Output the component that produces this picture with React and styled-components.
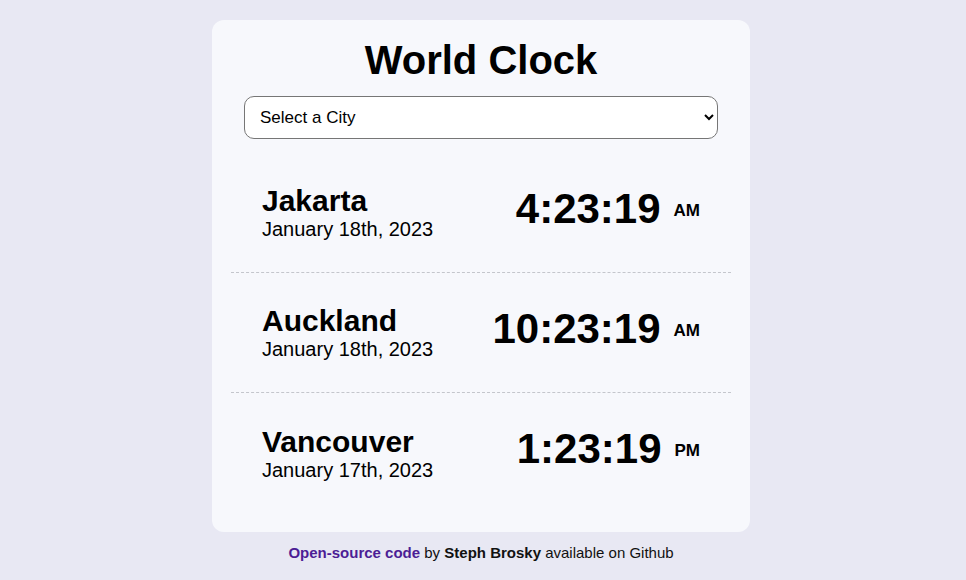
import React from "react";
import styled, { createGlobalStyle } from "styled-components";

const GlobalStyle = createGlobalStyle`
  html, body {
    margin: 0;
    padding: 0;
    background: #e8e8f3;
    font-family: "Liberation Sans", Arial, sans-serif;
    color: #000;
  }
`;

const Page = styled.div`
  min-height: 580px;
  padding: 20px 4px 0 0;
  box-sizing: border-box;
  display: flex;
  flex-direction: column;
  align-items: center;
`;

const Card = styled.main`
  width: 538px;
  box-sizing: border-box;
  background: #f7f8fc;
  border-radius: 12px;
  padding: 18px 19px 19px;
  display: flex;
  flex-direction: column;
`;

const Title = styled.h1`
  margin: 0 0 13px;
  font-size: 40px;
  font-weight: 700;
  text-align: center;
`;

const Select = styled.select`
  margin: 0 13px;
  height: 43px;
  box-sizing: border-box;
  padding: 0 10px 0 11px;
  border: 1px solid #767676;
  border-radius: 10px;
  background: #fff;
  font-family: "Liberation Sans", Arial, sans-serif;
  font-size: 17px;
  color: #000;
`;

const List = styled.ul`
  list-style: none;
  margin: 14px 0 0;
  padding: 0;
`;

const Row = styled.li`
  height: 120px;
  box-sizing: border-box;
  padding: 0 31px;
  display: flex;
  align-items: center;
  justify-content: space-between;
  border-bottom: ${(p) => (p.$last ? "none" : "1px dashed #c4c6cc")};
`;

const Place = styled.div`
  display: flex;
  flex-direction: column;
`;

const City = styled.span`
  font-size: 30px;
  font-weight: 700;
`;

const DateText = styled.span`
  font-size: 20px;
`;

const Clock = styled.div`
  display: flex;
  align-items: center;
  gap: 13px;
  padding-bottom: 8px;
`;

const Time = styled.span`
  font-size: 42px;
  font-weight: 700;
`;

const Meridiem = styled.span`
  font-size: 17px;
  font-weight: 700;
  padding-top: 4px;
`;

const Footer = styled.footer`
  margin-top: 12px;
  font-size: 15px;
  color: #111;
`;

const SourceLink = styled.a`
  color: #4c1d95;
  font-weight: 700;
  text-decoration: none;
`;

const clocks = [
  { city: "Jakarta", date: "January 18th, 2023", time: "4:23:19", ampm: "AM" },
  { city: "Auckland", date: "January 18th, 2023", time: "10:23:19", ampm: "AM" },
  { city: "Vancouver", date: "January 17th, 2023", time: "1:23:19", ampm: "PM" },
];

export default function App() {
  return (
    <Page>
      <GlobalStyle />
      <Card>
        <Title>World Clock</Title>
        <Select defaultValue="">
          <option value="">Select a City</option>
          <option value="jakarta">Jakarta</option>
          <option value="auckland">Auckland</option>
          <option value="vancouver">Vancouver</option>
        </Select>
        <List>
          {clocks.map((c, i) => (
            <Row key={c.city} $last={i === clocks.length - 1}>
              <Place>
                <City>{c.city}</City>
                <DateText>{c.date}</DateText>
              </Place>
              <Clock>
                <Time>{c.time}</Time>
                <Meridiem>{c.ampm}</Meridiem>
              </Clock>
            </Row>
          ))}
        </List>
      </Card>
      <Footer>
        <SourceLink href="#">Open-source code</SourceLink> by{" "}
        <strong>Steph Brosky</strong> available on Github
      </Footer>
    </Page>
  );
}
